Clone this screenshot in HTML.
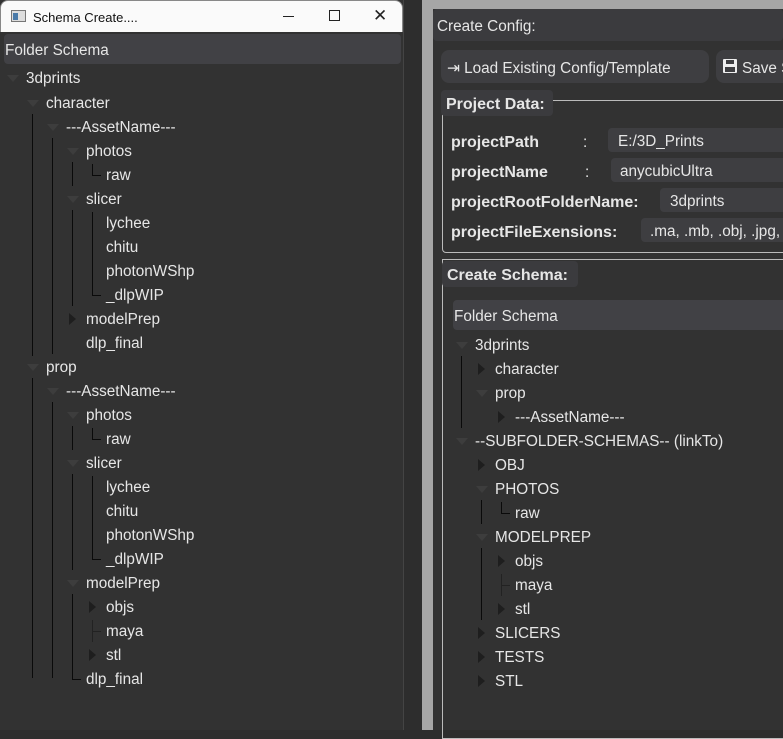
<!DOCTYPE html>
<html><head><meta charset="utf-8"><style>
*{margin:0;padding:0;box-sizing:border-box}
body{width:783px;height:730px;overflow:hidden;background:#2d2d2d;font-family:"Liberation Sans Narrow","Liberation Sans",sans-serif;color:#e6e6e6;position:relative;font-size:15.3px}
.a{position:absolute}
.t{position:absolute;line-height:20px;white-space:nowrap;margin-top:1px}
.dn{position:absolute;width:0;height:0;border-left:6px solid transparent;border-right:6px solid transparent;border-top:7px solid #3d3d3d}
.rt{position:absolute;width:0;height:0;border-top:6px solid transparent;border-bottom:6px solid transparent;border-left:7px solid #1e1e1e}
.vl{position:absolute;width:1px;background:#0a0a0a}
.hl{position:absolute;height:1px;background:#0a0a0a}
.b{font-weight:bold;font-size:16px}
</style></head><body>
<div class="a" style="left:0;top:0;width:404px;height:730px;background:#323232;border-right:1px solid #444"></div>
<div class="a" style="left:0;top:0;width:403px;height:32px;background:#fafafa;border-radius:8px 8px 0 0;border:1px solid #888;border-bottom:none"></div>
<div class="a" style="left:11px;top:10px;width:15px;height:12px;border:1px solid #777;background:#ddd"><div class="a" style="left:1px;top:2px;width:5px;height:7px;background:#4a7aa8"></div></div>
<div class="t" style="left:33px;top:7px;color:#111;font-family:'Liberation Sans',sans-serif;font-size:13px">Schema Create....</div>
<div class="a" style="left:283px;top:16px;width:11px;height:1px;background:#222"></div>
<div class="a" style="left:329px;top:10px;width:11px;height:11px;border:1px solid #222"></div>
<div class="t" style="left:373px;top:5px;color:#222;font-size:17px;font-family:'DejaVu Sans',sans-serif">✕</div>
<div class="a" style="left:4px;top:34px;width:397px;height:30px;background:#414145;border-radius:4px"></div>
<div class="t" style="left:5px;top:40px">Folder Schema</div>

<div class="a" style="left:422px;top:0;width:11px;height:730px;background:#a6a6a6"></div>
<div class="a" style="left:433px;top:0;width:350px;height:9px;background:#a6a6a6"></div>
<div class="a" style="left:433px;top:9px;width:350px;height:721px;background:#323232"></div>
<div class="a" style="left:433px;top:9px;width:350px;height:32px;background:#3b3b3e;border-radius:4px"></div>
<div class="t" style="left:437px;top:16px">Create Config:</div>
<div class="a" style="left:441px;top:50px;width:268px;height:33px;background:#3e3e41;border-radius:8px"></div>
<div class="t" style="left:447px;top:58px">⇥ Load Existing Config/Template</div>
<div class="a" style="left:716px;top:50px;width:80px;height:33px;background:#3e3e41;border-radius:8px"></div>
<div class="a" style="left:723px;top:59px;width:14px;height:14px;background:#eee;border-radius:1px"><div class="a" style="left:3px;top:1px;width:8px;height:4px;background:#3e3e41"></div><div class="a" style="left:2px;top:8px;width:10px;height:5px;background:#3e3e41"></div></div>
<div class="t" style="left:742px;top:58px">Save S</div>

<div class="a" style="left:442px;top:100px;width:350px;height:153px;border:1px solid #bbb;border-radius:4px"></div>
<div class="a" style="left:441px;top:90px;width:112px;height:26px;background:#3b3b3e;border-radius:4px"></div>
<div class="t b" style="left:446px;top:94px">Project Data:</div>
<div class="t b" style="left:451px;top:132px">projectPath</div><div class="t" style="left:583px;top:132px">:</div>
<div class="a" style="left:608px;top:128px;width:180px;height:24px;background:#3e3e41;border-radius:4px"></div><div class="t" style="left:618px;top:131px">E:/3D_Prints</div>
<div class="t b" style="left:451px;top:162px">projectName</div><div class="t" style="left:585px;top:162px">:</div>
<div class="a" style="left:611px;top:158px;width:180px;height:24px;background:#3e3e41;border-radius:4px"></div><div class="t" style="left:620px;top:161px">anycubicUltra</div>
<div class="t b" style="left:451px;top:192px">projectRootFolderName:</div>
<div class="a" style="left:660px;top:188px;width:130px;height:24px;background:#3e3e41;border-radius:4px"></div><div class="t" style="left:670px;top:191px">3dprints</div>
<div class="t b" style="left:451px;top:222px">projectFileExensions:</div>
<div class="a" style="left:641px;top:218px;width:150px;height:24px;background:#3e3e41;border-radius:4px"></div><div class="t" style="left:650px;top:221px">.ma, .mb, .obj, .jpg,</div>

<div class="a" style="left:442px;top:259px;width:350px;height:480px;border:1px solid #bbb"></div>
<div class="a" style="left:442px;top:261px;width:136px;height:26px;background:#3b3b3e;border-radius:4px"></div>
<div class="t b" style="left:447px;top:265px">Create Schema:</div>
<div class="a" style="left:453px;top:300px;width:340px;height:30px;background:#414145;border-radius:4px"></div>
<div class="t" style="left:454px;top:306px">Folder Schema</div>

<div class="dn" style="left:7px;top:75px"></div><div class="t" style="left:26px;top:68px">3dprints</div>
<div class="dn" style="left:27px;top:100px"></div><div class="t" style="left:46px;top:93px">character</div>
<div class="vl" style="left:32px;top:114px;height:242px"></div>
<div class="dn" style="left:47px;top:124px"></div><div class="t" style="left:66px;top:117px">---AssetName---</div>
<div class="vl" style="left:52px;top:138px;height:216px"></div>
<div class="dn" style="left:67px;top:148px"></div><div class="t" style="left:86px;top:141px">photos</div>
<div class="vl" style="left:72px;top:162px;height:24px"></div>
<div class="vl" style="left:92px;top:164px;height:11px"></div><div class="hl" style="left:92px;top:175px;width:9px"></div>
<div class="t" style="left:106px;top:165px">raw</div>
<div class="dn" style="left:67px;top:196px"></div><div class="t" style="left:86px;top:189px">slicer</div>
<div class="vl" style="left:72px;top:210px;height:96px"></div>
<div class="vl" style="left:92px;top:212px;height:84px"></div><div class="hl" style="left:92px;top:295px;width:9px"></div>
<div class="t" style="left:106px;top:213px">lychee</div>
<div class="t" style="left:106px;top:237px">chitu</div>
<div class="t" style="left:106px;top:261px">photonWShp</div>
<div class="t" style="left:106px;top:285px">_dlpWIP</div>
<div class="rt" style="left:69px;top:313px"></div><div class="t" style="left:86px;top:309px">modelPrep</div>
<div class="t" style="left:86px;top:333px">dlp_final</div>
<div class="dn" style="left:27px;top:364px"></div><div class="t" style="left:46px;top:357px">prop</div>
<div class="vl" style="left:32px;top:378px;height:300px"></div>
<div class="dn" style="left:47px;top:388px"></div><div class="t" style="left:66px;top:381px">---AssetName---</div>
<div class="vl" style="left:52px;top:402px;height:276px"></div>
<div class="dn" style="left:67px;top:412px"></div><div class="t" style="left:86px;top:405px">photos</div>
<div class="vl" style="left:72px;top:426px;height:24px"></div>
<div class="vl" style="left:92px;top:428px;height:11px"></div><div class="hl" style="left:92px;top:439px;width:9px"></div>
<div class="t" style="left:106px;top:429px">raw</div>
<div class="dn" style="left:67px;top:460px"></div><div class="t" style="left:86px;top:453px">slicer</div>
<div class="vl" style="left:72px;top:474px;height:96px"></div>
<div class="vl" style="left:92px;top:476px;height:84px"></div><div class="hl" style="left:92px;top:559px;width:9px"></div>
<div class="t" style="left:106px;top:477px">lychee</div>
<div class="t" style="left:106px;top:501px">chitu</div>
<div class="t" style="left:106px;top:525px">photonWShp</div>
<div class="t" style="left:106px;top:549px">_dlpWIP</div>
<div class="dn" style="left:67px;top:580px"></div><div class="t" style="left:86px;top:573px">modelPrep</div>
<div class="vl" style="left:72px;top:594px;height:85px"></div><div class="hl" style="left:72px;top:679px;width:9px"></div>
<div class="rt" style="left:89px;top:601px"></div><div class="t" style="left:106px;top:597px">objs</div>
<div class="vl" style="left:92px;top:620px;height:22px;background:#222"></div><div class="hl" style="left:92px;top:631px;width:9px;background:#222"></div>
<div class="t" style="left:106px;top:621px">maya</div>
<div class="rt" style="left:89px;top:649px"></div><div class="t" style="left:106px;top:645px">stl</div>
<div class="t" style="left:86px;top:669px">dlp_final</div>

<div class="dn" style="left:456px;top:342px"></div><div class="t" style="left:475px;top:335px">3dprints</div>
<div class="vl" style="left:461px;top:356px;height:72px"></div>
<div class="rt" style="left:478px;top:363px"></div><div class="t" style="left:495px;top:359px">character</div>
<div class="dn" style="left:476px;top:390px"></div><div class="t" style="left:495px;top:383px">prop</div>
<div class="rt" style="left:498px;top:411px"></div><div class="t" style="left:515px;top:407px">---AssetName---</div>
<div class="dn" style="left:456px;top:438px"></div><div class="t" style="left:475px;top:431px">--SUBFOLDER-SCHEMAS-- (linkTo)</div>
<div class="rt" style="left:478px;top:459px"></div><div class="t" style="left:495px;top:455px">OBJ</div>
<div class="dn" style="left:476px;top:486px"></div><div class="t" style="left:495px;top:479px">PHOTOS</div>
<div class="vl" style="left:481px;top:500px;height:24px"></div>
<div class="vl" style="left:501px;top:502px;height:11px"></div><div class="hl" style="left:501px;top:513px;width:9px"></div>
<div class="t" style="left:515px;top:503px">raw</div>
<div class="dn" style="left:476px;top:534px"></div><div class="t" style="left:495px;top:527px">MODELPREP</div>
<div class="vl" style="left:481px;top:548px;height:72px"></div>
<div class="rt" style="left:498px;top:555px"></div><div class="t" style="left:515px;top:551px">objs</div>
<div class="vl" style="left:501px;top:574px;height:22px;background:#222"></div><div class="hl" style="left:501px;top:585px;width:9px;background:#222"></div>
<div class="t" style="left:515px;top:575px">maya</div>
<div class="rt" style="left:498px;top:603px"></div><div class="t" style="left:515px;top:599px">stl</div>
<div class="rt" style="left:478px;top:627px"></div><div class="t" style="left:495px;top:623px">SLICERS</div>
<div class="rt" style="left:478px;top:651px"></div><div class="t" style="left:495px;top:647px">TESTS</div>
<div class="rt" style="left:478px;top:675px"></div><div class="t" style="left:495px;top:671px">STL</div>
</body></html>
